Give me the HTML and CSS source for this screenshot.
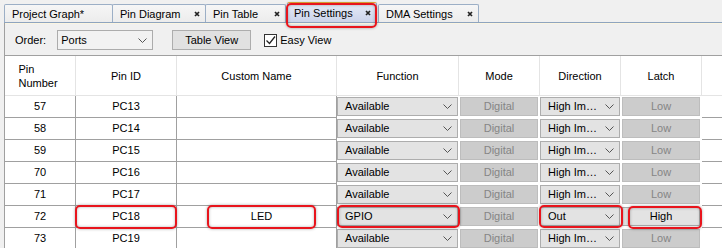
FILE: index.html
```html
<!DOCTYPE html>
<html lang="en">
<head>
  <meta charset="UTF-8" />
  <title>Pin Settings</title>
  <link rel="stylesheet" href="styles.css">
</head>
<body>
  <div class="app">
    <div class="tabs">
      <div class="tab t1"><span>Project Graph*</span></div>
      <div class="tab t2"><span>Pin Diagram</span><svg class="close" viewBox="0 0 6 6"><path d="M1 1L5 5M5 1L1 5"/></svg></div>
      <div class="tab t3"><span>Pin Table</span><svg class="close" viewBox="0 0 6 6"><path d="M1 1L5 5M5 1L1 5"/></svg></div>
      <div class="tab t4 active"><span>Pin Settings</span><svg class="close" viewBox="0 0 6 6"><path d="M1 1L5 5M5 1L1 5"/></svg><div class="mark tab-mark"></div></div>
      <div class="tab t5"><span>DMA Settings</span><svg class="close" viewBox="0 0 6 6"><path d="M1 1L5 5M5 1L1 5"/></svg></div>
    </div>

    <div class="panel">
      <div class="toolbar">
        <span class="lbl">Order:</span>
        <div class="select"><span>Ports</span><svg class="chev" viewBox="0 0 9 5"><polyline points="0.5,0.5 4.5,4.5 8.5,0.5"/></svg></div>
        <div class="btn">Table View</div>
        <div class="check"><span class="box"><svg viewBox="0 0 11 11"><polyline points="1.5,5.5 4.5,8.5 10,1.5"/></svg></span>Easy View</div>
      </div>

      <table class="pins">
        <thead>
          <tr>
            <th class="c1"><span class="two">Pin<br>Number</span></th>
            <th class="c2">Pin ID</th>
            <th class="c3">Custom Name</th>
            <th class="c4">Function</th>
            <th class="c5">Mode</th>
            <th class="c6">Direction</th>
            <th class="c7">Latch</th>
            <th class="c8"></th>
          </tr>
        </thead>
        <tbody>
          <tr>
            <td>57</td><td>PC13</td><td></td>
            <td class="cb"><div class="combo"><span>Available</span><svg class="chev" viewBox="0 0 9 5"><polyline points="0.5,0.5 4.5,4.5 8.5,0.5"/></svg></div></td>
            <td class="cb"><div class="combo off">Digital</div></td>
            <td class="cb"><div class="combo"><span>High Im…</span><svg class="chev" viewBox="0 0 9 5"><polyline points="0.5,0.5 4.5,4.5 8.5,0.5"/></svg></div></td>
            <td class="cb"><div class="combo off">Low</div></td>
            <td class="end"></td>
          </tr>
          <tr>
            <td>58</td><td>PC14</td><td></td>
            <td class="cb"><div class="combo"><span>Available</span><svg class="chev" viewBox="0 0 9 5"><polyline points="0.5,0.5 4.5,4.5 8.5,0.5"/></svg></div></td>
            <td class="cb"><div class="combo off">Digital</div></td>
            <td class="cb"><div class="combo"><span>High Im…</span><svg class="chev" viewBox="0 0 9 5"><polyline points="0.5,0.5 4.5,4.5 8.5,0.5"/></svg></div></td>
            <td class="cb"><div class="combo off">Low</div></td>
            <td class="end"></td>
          </tr>
          <tr>
            <td>59</td><td>PC15</td><td></td>
            <td class="cb"><div class="combo"><span>Available</span><svg class="chev" viewBox="0 0 9 5"><polyline points="0.5,0.5 4.5,4.5 8.5,0.5"/></svg></div></td>
            <td class="cb"><div class="combo off">Digital</div></td>
            <td class="cb"><div class="combo"><span>High Im…</span><svg class="chev" viewBox="0 0 9 5"><polyline points="0.5,0.5 4.5,4.5 8.5,0.5"/></svg></div></td>
            <td class="cb"><div class="combo off">Low</div></td>
            <td class="end"></td>
          </tr>
          <tr>
            <td>70</td><td>PC16</td><td></td>
            <td class="cb"><div class="combo"><span>Available</span><svg class="chev" viewBox="0 0 9 5"><polyline points="0.5,0.5 4.5,4.5 8.5,0.5"/></svg></div></td>
            <td class="cb"><div class="combo off">Digital</div></td>
            <td class="cb"><div class="combo"><span>High Im…</span><svg class="chev" viewBox="0 0 9 5"><polyline points="0.5,0.5 4.5,4.5 8.5,0.5"/></svg></div></td>
            <td class="cb"><div class="combo off">Low</div></td>
            <td class="end"></td>
          </tr>
          <tr>
            <td>71</td><td>PC17</td><td></td>
            <td class="cb"><div class="combo"><span>Available</span><svg class="chev" viewBox="0 0 9 5"><polyline points="0.5,0.5 4.5,4.5 8.5,0.5"/></svg></div></td>
            <td class="cb"><div class="combo off">Digital</div></td>
            <td class="cb"><div class="combo"><span>High Im…</span><svg class="chev" viewBox="0 0 9 5"><polyline points="0.5,0.5 4.5,4.5 8.5,0.5"/></svg></div></td>
            <td class="cb"><div class="combo off">Low</div></td>
            <td class="end"></td>
          </tr>
          <tr>
            <td>72</td>
            <td class="rel">PC18<div class="mark m-id"></div></td>
            <td class="rel led">LED<div class="mark m-name"></div></td>
            <td class="cb rel"><div class="combo"><span>GPIO</span><svg class="chev" viewBox="0 0 9 5"><polyline points="0.5,0.5 4.5,4.5 8.5,0.5"/></svg></div><div class="mark m-func"></div></td>
            <td class="cb"><div class="combo off">Digital</div></td>
            <td class="cb rel"><div class="combo"><span>Out</span><svg class="chev" viewBox="0 0 9 5"><polyline points="0.5,0.5 4.5,4.5 8.5,0.5"/></svg></div><div class="mark m-dir"></div></td>
            <td class="cb rel"><div class="combo on">High</div><div class="mark m-latch"></div></td>
            <td class="end"></td>
          </tr>
          <tr>
            <td>73</td><td>PC19</td><td></td>
            <td class="cb"><div class="combo"><span>Available</span><svg class="chev" viewBox="0 0 9 5"><polyline points="0.5,0.5 4.5,4.5 8.5,0.5"/></svg></div></td>
            <td class="cb"><div class="combo off">Digital</div></td>
            <td class="cb"><div class="combo"><span>High Im…</span><svg class="chev" viewBox="0 0 9 5"><polyline points="0.5,0.5 4.5,4.5 8.5,0.5"/></svg></div></td>
            <td class="cb"><div class="combo off">Low</div></td>
            <td class="end"></td>
          </tr>
        </tbody>
      </table>
    </div>
  </div>
</body>
</html>
```

FILE: styles.css
```css
* {
  box-sizing: border-box;
  margin: 0;
  padding: 0;
}

body {
  font-family: 'Liberation Sans', Arial, sans-serif;
  font-size: 11px;
  color: #000;
  background: #f0f0f0;
  overflow: hidden;
}

.app {
  margin-left: 4px;
  width: 718px;
}

/* tab strip */
.tabs {
  display: flex;
  align-items: flex-end;
  height: 23px;
  border-bottom: 1px solid #8ea4bf;
}

.tab {
  position: relative;
  display: flex;
  align-items: center;
  justify-content: space-between;
  height: 18px;
  padding: 0 5px 0 7px;
  border: 1px solid #9cafc6;
  border-bottom: none;
  border-radius: 2px 2px 0 0;
  background: linear-gradient(#f6f6f6, #ececec);
  white-space: nowrap;
}

.t1 { width: 109px; }
.t2 { width: 94px; margin-left: -1px; }
.t3 { width: 81px; margin-left: -1px; }
.t4 { width: 90px; margin-left: 1px; padding-left: 6px; }
.t5 { width: 101px; margin-left: 1px; }

.tab.active {
  height: 20px;
  border-top: 1px solid #f0b23c;
  background: linear-gradient(#e6ebf7, #cbd3ea);
}

.close {
  width: 6px;
  height: 6px;
  fill: none;
  stroke: #222;
  stroke-width: 1.7;
}

/* red call-outs laid over the ui */
.mark {
  position: absolute;
  z-index: 2;
  border: 2px solid #e8141c;
  border-radius: 5px;
  box-shadow: 0 0 3px rgba(0, 0, 0, 0.35), inset 0 0 3px rgba(0, 0, 0, 0.3);
  pointer-events: none;
}

.tab-mark { left: -2px; right: -1px; top: 0; bottom: -6px; }
.m-id { left: -1px; right: -1px; top: -1px; bottom: -2px; }
.m-name { left: 30px; right: 20px; top: -1px; bottom: -2px; }
.m-func { left: 0; right: -2px; top: -1px; bottom: -1px; }
.m-dir { left: -1px; right: -3px; top: -1px; bottom: -1px; }
.m-latch { left: 7px; right: -1px; top: 0; bottom: -2px; }

/* panel */
.panel {
  border-left: 1px solid #a0a0a0;
}

.toolbar {
  display: flex;
  align-items: center;
  height: 33px;
  padding: 6px 0 5px 10px;
  border-top: 1px solid #fbf5e1;
  border-bottom: 1px solid #a0a0a0;
}

.select {
  display: flex;
  align-items: center;
  justify-content: space-between;
  width: 96px;
  height: 20px;
  margin-left: 11px;
  padding: 0 5px 0 3px;
  border: 1px solid #acacac;
  background: #f2f2f2;
}

.btn {
  width: 79px;
  height: 20px;
  margin-left: 19px;
  line-height: 18px;
  text-align: center;
  border: 1px solid #adadad;
  background: #e1e1e1;
}

.check {
  display: flex;
  align-items: center;
  margin-left: 13px;
}

.check .box {
  width: 13px;
  height: 13px;
  margin-right: 3px;
  border: 1px solid #333;
  background: #fff;
}

.check svg {
  display: block;
  width: 11px;
  height: 11px;
  fill: none;
  stroke: #222;
  stroke-width: 1.3;
}

.chev {
  width: 9px;
  height: 5px;
  fill: none;
  stroke: #555;
  stroke-width: 1;
}

/* pin table */
.pins {
  width: 717px;
  table-layout: fixed;
  border-spacing: 0;
  background: #fff;
}

.pins th {
  height: 40px;
  font-weight: normal;
  border-right: 1px solid #e4e4e4;
  border-bottom: 1px solid #e4e4e4;
  vertical-align: middle;
}

.pins .c1 { width: 71px; }
.pins .c2 { width: 101px; }
.pins .c3 { width: 160px; }
.pins .c4 { width: 122px; }
.pins .c5 { width: 81px; }
.pins .c6 { width: 81px; }
.pins .c7 { width: 81px; }
.pins .c8 { width: 20px; border-right: none; }

.two {
  display: inline-block;
  text-align: left;
  line-height: 14px;
  margin-right: 4px;
}

.pins td {
  height: 22px;
  padding: 0;
  text-align: center;
  vertical-align: top;
  line-height: 21px;
  border-right: 1px solid #a0a0a0;
  border-bottom: 1px solid #a0a0a0;
}

.pins td.cb {
  border-color: #fff;
}

.pins td.end {
  border-right: none;
}

.pins td.rel {
  position: relative;
}

.pins td.led {
  padding: 0 20px 0 30px;
}

.combo {
  display: flex;
  align-items: center;
  justify-content: space-between;
  height: 19px;
  margin-top: 1px;
  padding: 0 5px 0 7px;
  border: 1px solid #adadad;
  background: #e3e3e3;
  line-height: 17px;
  text-align: left;
}

.combo.off,
.combo.on {
  display: block;
  margin: 1px 1px 0;
  padding: 0;
  text-align: center;
}

.combo.off {
  color: #858585;
  border-color: #bdbdbd;
  background: #cccccc;
}
```
